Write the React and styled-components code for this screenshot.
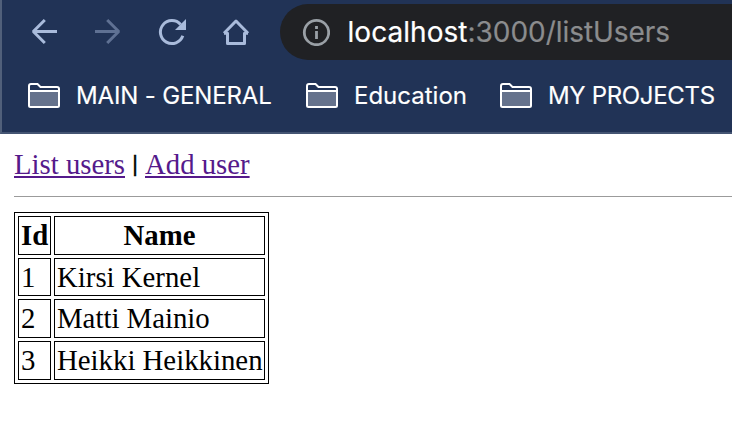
import React from "react";
import styled, { createGlobalStyle } from "styled-components";

const GlobalStyle = createGlobalStyle`
  body {
    margin: 0;
    background: #fff;
    overflow: hidden;
  }
`;

const Chrome = styled.header`
  box-sizing: border-box;
  height: 134px;
  overflow: hidden;
  background: #213356;
  border-left: 2px solid #51607a;
  border-bottom: 2px solid #445472;
`;

const Toolbar = styled.div`
  display: flex;
  align-items: center;
  height: 64px;
  padding-left: 26px;
`;

const NavIcon = styled.svg`
  flex: none;
  width: 32px;
  height: 32px;
  margin-right: 32px;
  fill: none;
  stroke: ${(p) => (p.$dim ? "#5f7193" : "#a9bbdb")};
  stroke-width: 3;

  &:nth-of-type(4) {
    margin-right: 28px;
  }
`;

const ArrowHead = styled.path`
  fill: #a9bbdb;
  stroke: none;
`;

const AddressBar = styled.div`
  display: flex;
  align-items: center;
  flex: none;
  box-sizing: border-box;
  width: 520px;
  height: 56px;
  padding-left: 22px;
  border-radius: 28px;
  background: #202124;
`;

const InfoIcon = styled.svg`
  flex: none;
  width: 28px;
  height: 28px;
  margin-right: 17.5px;
  fill: none;
  stroke: #9aa0a6;
  stroke-width: 2.8;
`;

const Url = styled.span`
  font: 400 28px/34px Inter, "Liberation Sans", sans-serif;
  color: ${(p) => (p.$path ? "#8b8c8e" : "#fff")};
  letter-spacing: ${(p) => (p.$path ? "-0.05px" : "0.05px")};
  -webkit-text-stroke: 0.2px currentColor;
  white-space: nowrap;
`;

const Bookmarks = styled.nav`
  display: flex;
  align-items: center;
  height: 64px;
  padding-left: 26px;
`;

const Bookmark = styled.div`
  display: flex;
  align-items: center;
  flex: none;
  box-sizing: border-box;
  width: ${(p) => p.$width}px;
`;

const Folder = styled.svg`
  flex: none;
  width: 32px;
  height: 26px;
  margin-right: 16px;
`;

const BookmarkLabel = styled.span`
  font: 400 24px/32px Inter, "Liberation Sans", sans-serif;
  letter-spacing: ${(p) => p.$spacing}px;
  -webkit-text-stroke: 0.15px currentColor;
  color: #fff;
  white-space: nowrap;
`;

const Page = styled.main`
  padding: 14px 0 0 14px;
  font-family: "Liberation Serif", serif;
  font-size: 28.8px;
  color: #000;
`;

const Links = styled.nav`
  display: flex;
  height: 34px;
  font-size: 28.75px;
  line-height: 33px;
`;

const PageLink = styled.a`
  color: #551a8b;
  text-decoration: underline;
  text-decoration-thickness: 2px;
  text-underline-offset: 2px;
  white-space: nowrap;
`;

const Separator = styled.span`
  width: 20px;
  font: 400 21.5px/32px "Liberation Sans", sans-serif;
  -webkit-text-stroke: 0.4px #000;
  text-align: center;
`;

const Divider = styled.hr`
  height: 0;
  margin: 14px 0 15px;
  border: 0;
  border-top: 1px solid #9b9b9b;
`;

const UserTable = styled.table`
  table-layout: fixed;
  width: 255px;
  border: 1px solid #000;
  border-collapse: separate;
  border-spacing: 3px;
  line-height: 33px;
`;

const Row = styled.tr`
  height: ${(p) => p.$height}px;
`;

const Cell = styled.td`
  box-sizing: border-box;
  width: ${(p) => p.$width}px;
  height: inherit;
  padding: 0 2px;
  border: 1px solid #000;
  text-align: ${(p) => (p.as === "th" ? "center" : "left")};
  white-space: nowrap;
`;

const bookmarks = [
  { label: "MAIN - GENERAL", width: 278, spacing: -0.15 },
  { label: "Education", width: 194, spacing: 0 },
  { label: "MY PROJECTS", width: 240, spacing: -0.33 },
];

const users = [
  { id: 1, name: "Kirsi Kernel", height: 38 },
  { id: 2, name: "Matti Mainio", height: 39 },
  { id: 3, name: "Heikki Heikkinen", height: 39 },
];

function FolderIcon() {
  return (
    <Folder viewBox="0 0 32 26">
      <path d="M2 8h28v15H2z" fill="#65728c" />
      <path
        d="M1 3Q1 1 3 1h6.5L12.5 4H29q2 0 2 2v16.500q0 1.500-1.500 1.500h-27Q1 24 1 22.500zM1 8h30"
        fill="none"
        stroke="#fff"
        strokeWidth="2"
      />
    </Folder>
  );
}

export default function App() {
  return (
    <>
      <GlobalStyle />
      <Chrome>
        <Toolbar>
          <NavIcon viewBox="0 0 32 32">
            <path strokeLinejoin="bevel" d="M29 15.500H4.500M16.800 4l-11.500 11.500 11.500 11.500" />
          </NavIcon>
          <NavIcon viewBox="0 0 32 32" $dim>
            <path strokeLinejoin="bevel" d="M3 15.500h24.500M15.200 4l11.500 11.500-11.500 11.500" />
          </NavIcon>
          <NavIcon viewBox="0 0 32 32">
            <path d="M26.800 19.800A11.500 11.500 0 1 1 24.600 8.500" />
            <ArrowHead d="M30 3v11H19z" />
          </NavIcon>
          <NavIcon viewBox="0 0 32 32">
            <path strokeLinejoin="round" d="M4 17.300h3.500v10.200h17V17.300h3.500M4 17.300L16 5l12 12.300" />
          </NavIcon>
          <AddressBar>
            <InfoIcon viewBox="0 0 28 28">
              <circle cx="14.500" cy="14.500" r="12.200" />
              <path d="M14.500 8v3M14.500 13v8" />
            </InfoIcon>
            <Url>localhost</Url>
            <Url $path>:3000/listUsers</Url>
          </AddressBar>
        </Toolbar>
        <Bookmarks>
          {bookmarks.map((b) => (
            <Bookmark key={b.label} $width={b.width}>
              <FolderIcon />
              <BookmarkLabel $spacing={b.spacing}>{b.label}</BookmarkLabel>
            </Bookmark>
          ))}
        </Bookmarks>
      </Chrome>
      <Page>
        <Links>
          <PageLink>List users</PageLink>
          <Separator>|</Separator>
          <PageLink>Add user</PageLink>
        </Links>
        <Divider />
        <UserTable>
          <thead>
            <Row $height={39}>
              <Cell as="th" $width={33}>Id</Cell>
              <Cell as="th" $width={211}>Name</Cell>
            </Row>
          </thead>
          <tbody>
            {users.map((u) => (
              <Row key={u.id} $height={u.height}>
                <Cell>{u.id}</Cell>
                <Cell>{u.name}</Cell>
              </Row>
            ))}
          </tbody>
        </UserTable>
      </Page>
    </>
  );
}
